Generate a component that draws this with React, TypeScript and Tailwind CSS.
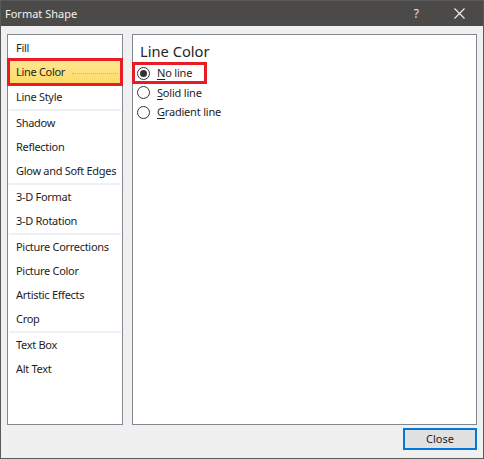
import React from 'react';

const font = { fontFamily: '"Noto Sans", "Open Sans", Arial, sans-serif' };

type Item = { label: string; selected?: boolean };

const groups: Item[][] = [
  [{ label: 'Fill' }, { label: 'Line Color', selected: true }, { label: 'Line Style' }],
  [{ label: 'Shadow' }, { label: 'Reflection' }, { label: 'Glow and Soft Edges' }],
  [{ label: '3-D Format' }, { label: '3-D Rotation' }],
  [
    { label: 'Picture Corrections' },
    { label: 'Picture Color' },
    { label: 'Artistic Effects' },
    { label: 'Crop' },
  ],
  [{ label: 'Text Box' }, { label: 'Alt Text' }],
];

function NavItem({ item }: { item: Item }) {
  if (item.selected) {
    return (
      <div className="flex h-[26px] items-center whitespace-nowrap pl-[8px] bg-gradient-to-b from-[#fee98f] to-[#fdd868] outline-[3px] outline-solid outline-[#e81c24] -outline-offset-2">
        <span>{item.label}</span>
        <span className="ml-auto mr-[4px] mt-[2px] h-0 w-[46px] border-t border-dotted border-[#d9b650]" />
      </div>
    );
  }
  return (
    <div className="flex h-[24px] items-center whitespace-nowrap pl-[8px]">
      <span>{item.label}</span>
    </div>
  );
}

function Radio({ checked }: { checked?: boolean }) {
  return (
    <span className="flex h-[13px] w-[13px] shrink-0 items-center justify-center rounded-full border border-[#333333] bg-white">
      {checked && <span className="h-[7px] w-[7px] rounded-full bg-[#333333]" />}
    </span>
  );
}

function RadioRow({
  access,
  rest,
  checked,
  className,
}: {
  access: string;
  rest: string;
  checked?: boolean;
  className?: string;
}) {
  return (
    <div className={`flex items-center gap-[7px] whitespace-nowrap pl-[4px] ${className ?? ''}`}>
      <Radio checked={checked} />
      <span>
        <span className="underline underline-offset-2">{access}</span>
        {rest}
      </span>
    </div>
  );
}

export default function App() {
  return (
    <div
      className="flex h-[459px] w-[484px] flex-col border border-[#5a5a5a] bg-[#f0f0f0] text-[11px] leading-[16px] text-[#1e1e1e]"
      style={font}
    >
      {/* Title bar */}
      <div className="flex h-[25px] shrink-0 items-center bg-[#4b4a48] pl-[4px] text-[#f2f2f2]">
        <span>Format Shape</span>
        <span className="ml-auto mr-[35px] text-[12px] text-[#e6e6e6]">?</span>
        <svg width="11" height="11" viewBox="0 0 11 11" className="mr-[18px]">
          <path d="M0.5 0.5 L10.5 10.5 M10.5 0.5 L0.5 10.5" stroke="#f2f2f2" strokeWidth="1.1" />
        </svg>
      </div>

      {/* Body */}
      <div className="flex flex-1 flex-col px-[6px] pt-[8px] pb-[7px]">
        <div className="flex h-[391px] gap-[9px]">
          {/* Category list */}
          <div className="w-[116px] shrink-0 border border-[#828790] bg-white pt-[1px] tracking-[-0.3px]">
            {groups.map((g, gi) => (
              <div key={gi}>
                {gi > 0 && <div className="mx-[1px] h-[2px] bg-[#eef0f6]" />}
                {g.map((item, ii) => (
                  <div key={item.label} className={gi === 0 && ii === 0 ? '-mb-[1px]' : ''}>
                    <NavItem item={item} />
                  </div>
                ))}
              </div>
            ))}
          </div>

          {/* Options pane */}
          <div className="flex-1 border border-[#828790] bg-white">
            <div className="h-[28px] pl-[7px] pt-[5px] text-[14.7px] leading-[22px] text-[#262626]">
              Line Color
            </div>
            <div className="tracking-[-0.2px]">
              <RadioRow
                access="N"
                rest="o line"
                checked
                className="h-[20px] w-[73px] outline-[3px] outline-solid outline-[#e81c24] -outline-offset-2"
              />
              <RadioRow access="S" rest="olid line" className="h-[19px]" />
              <RadioRow access="G" rest="radient line" className="h-[20px]" />
            </div>
          </div>
        </div>

        <div className="mt-[3px] flex justify-end">
          <button className="flex h-[22px] w-[74px] items-center justify-center border-2 border-[#0078d7] bg-[#e1e1e1] text-[11px] text-[#1e1e1e]">
            Close
          </button>
        </div>
      </div>
    </div>
  );
}
